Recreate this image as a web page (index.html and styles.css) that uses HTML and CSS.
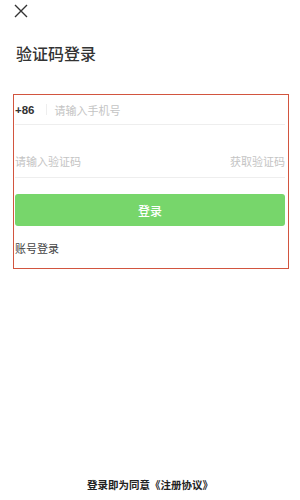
FILE: index.html
```html
<!DOCTYPE html>
<html lang="zh-CN">
<head>
    <meta charset="UTF-8">
    <meta name="viewport" content="width=device-width, initial-scale=1.0">
    <title>验证码登录</title>
    <link rel="stylesheet" href="styles.css">
</head>
<body>
    <div class="page">
        <div class="topbar">
            <svg class="close" width="14" height="14" viewBox="0 0 14 14">
                <path d="M1 1 L13 13 M13 1 L1 13" stroke="#333" stroke-width="1.4" fill="none"/>
            </svg>
        </div>
        <h1 class="title">验证码登录</h1>

        <div class="form">
            <div class="row">
                <span class="code">+86</span>
                <span class="sep"></span>
                <span class="hint">请输入手机号</span>
            </div>
            <div class="row row-sms">
                <span class="hint">请输入验证码</span>
                <span class="get-code">获取验证码</span>
            </div>
            <button class="login">登录</button>
            <div class="switch">账号登录</div>
        </div>

        <div class="footer">登录即为同意《注册协议》</div>
    </div>
</body>
</html>
```

FILE: styles.css
```css
body {
    margin: 0;
    background: #fff;
    font-family: "Noto Sans CJK SC", "Liberation Sans", sans-serif;
    color: #333;
}
.page {
    height: 500px;
    display: flex;
    flex-direction: column;
}
.topbar {
    height: 22px;
    padding: 4px 0 0 14px;
    box-sizing: border-box;
}
.close {
    display: block;
}
.title {
    margin: 20px 0 0 16px;
    font-size: 16px;
    font-weight: 500;
    line-height: 22px;
    color: #333;
}
.form {
    margin: 30px 11px 0 13px;
    border: 1.5px solid #d2553f;
    padding: 0 3px 0 1px;
    height: 175px;
    box-sizing: border-box;
}
.row {
    display: flex;
    align-items: center;
    height: 29px;
    border-bottom: 1px solid #eee;
    font-size: 11px;
}
.row-sms {
    height: 53px;
    align-items: flex-end;
    padding-bottom: 8px;
    box-sizing: border-box;
    justify-content: space-between;
}
.code {
    font-weight: 700;
    color: #333;
    font-family: "Liberation Sans", sans-serif;
    font-size: 11.5px;
}
.sep {
    width: 1px;
    height: 11px;
    background: #eee;
    margin: 0 8px 0 11px;
}
.hint {
    color: #c4c4c4;
}
.get-code {
    color: #c4c4c4;
}
.login {
    display: block;
    width: 100%;
    height: 32px;
    margin-top: 16px;
    border: none;
    border-radius: 3px;
    background: #77d66b;
    color: #fff;
    font-family: inherit;
    font-size: 12px;
    font-weight: 500;
}
.switch {
    margin-top: 14px;
    font-size: 11px;
    color: #444;
}
.footer {
    margin-top: auto;
    margin-bottom: 8px;
    text-align: center;
    font-size: 10.5px;
    font-weight: 700;
    color: #222;
}
```
